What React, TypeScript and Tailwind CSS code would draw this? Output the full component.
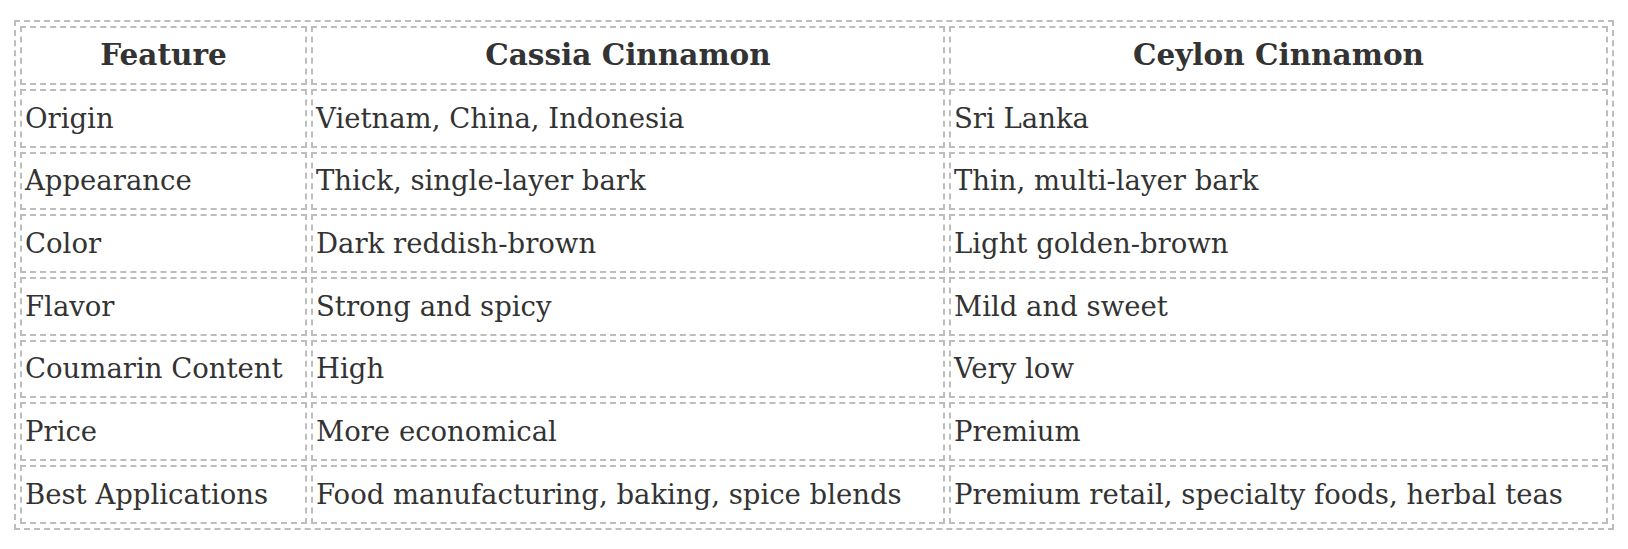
import React from "react";

const rows: [string, string, string][] = [
  ["Origin", "Vietnam, China, Indonesia", "Sri Lanka"],
  ["Appearance", "Thick, single-layer bark", "Thin, multi-layer bark"],
  ["Color", "Dark reddish-brown", "Light golden-brown"],
  ["Flavor", "Strong and spicy", "Mild and sweet"],
  ["Coumarin Content", "High", "Very low"],
  ["Price", "More economical", "Premium"],
  ["Best Applications", "Food manufacturing, baking, spice blends", "Premium retail, specialty foods, herbal teas"],
];

const heights = ["h-[59px]", "h-[58px]", "h-[59px]", "h-[59px]", "h-[58px]", "h-[59px]", "h-[59px]"];

export default function App() {
  return (
    <div className="bg-white w-[1628px] h-[549px] pt-[20px] pl-[14px] text-[#333] [font-family:'DejaVu_Serif',serif]">
      <table className="w-[1600px] table-fixed border-separate border-spacing-[4px] border-2 border-dashed border-[#bdbdbd] text-[27.5px] leading-normal">
        <colgroup>
          <col className="w-[287px]" />
          <col className="w-[634px]" />
          <col className="w-[659px]" />
        </colgroup>
        <thead>
          <tr>
            {["Feature", "Cassia Cinnamon", "Ceylon Cinnamon"].map((h) => (
              <th key={h} className="h-[59px] border-2 border-dashed border-[#bdbdbd] px-[3px] py-0 text-center text-[29.5px] font-bold align-middle">
                {h}
              </th>
            ))}
          </tr>
        </thead>
        <tbody>
          {rows.map((r, i) => (
            <tr key={r[0]}>
              {r.map((c, j) => (
                <td key={j} className={`${heights[i]} border-2 border-dashed border-[#bdbdbd] px-[3px] py-0 text-left align-middle whitespace-nowrap`}>
                  {c}
                </td>
              ))}
            </tr>
          ))}
        </tbody>
      </table>
    </div>
  );
}
